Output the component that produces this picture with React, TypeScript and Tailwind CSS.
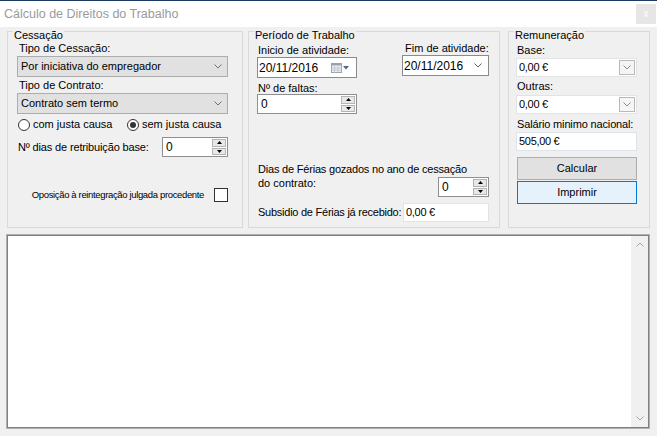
import React from 'react';

const Chevron = ({ className = '' }: { className?: string }) => (
  <svg width="8" height="5" viewBox="0 0 8 5" className={className}>
    <path d="M0.5 0.5 L4 4 L7.5 0.5" fill="none" stroke="currentColor" strokeWidth="1" />
  </svg>
);

const Combo = ({ value }: { value: string }) => (
  <div className="flex h-[21px] items-center justify-between border border-[#adadad] bg-[#e1e1e1] pl-[3px] pr-[5px]">
    <span>{value}</span>
    <Chevron className="text-[#707070]" />
  </div>
);

const Spin = ({ w, value }: { w: string; value: string }) => (
  <div className={`flex h-[20px] ${w} border border-[#8f8f8f] bg-white`}>
    <div className="flex-1 pl-[3px] text-[12px] leading-[18px]">{value}</div>
    <div className="flex w-[16px] flex-col gap-[1px] p-[1px]">
      <div className="flex flex-1 items-center justify-center border border-[#b4b4b4] bg-[#e8e8e8]">
        <svg width="5" height="3" viewBox="0 0 5 3"><path d="M0 3 L2.5 0 L5 3 Z" fill="#000" /></svg>
      </div>
      <div className="flex flex-1 items-center justify-center border border-[#b4b4b4] bg-[#e8e8e8]">
        <svg width="5" height="3" viewBox="0 0 5 3"><path d="M0 0 L2.5 3 L5 0 Z" fill="#000" /></svg>
      </div>
    </div>
  </div>
);

const MoneyCombo = ({ value }: { value: string }) => (
  <div className="flex h-[19px] border border-[#e3e3e3] bg-white p-[1px]">
    <div className="flex-1 pl-[1px] leading-[15px] tracking-[-0.3px]">{value}</div>
    <div className="flex w-[16px] items-center justify-center border border-[#b9b9b9] bg-[#f5f5f5]">
      <Chevron className="text-[#8a8a8a]" />
    </div>
  </div>
);

const Group = ({ title, className, children }: { title: string; className: string; children: React.ReactNode }) => (
  <div className={`relative h-[197px] border border-[#d9d9d9] ${className}`}>
    <span className="absolute -top-[3px] left-[5px] bg-[#f0f0f0] px-[1px] leading-[13px]">{title}</span>
    {children}
  </div>
);

const Radio = ({ checked, label }: { checked?: boolean; label: string }) => (
  <div className="flex items-center gap-[3px]">
    <div className="flex h-[12px] w-[12px] items-center justify-center rounded-full border border-[#333] bg-white">
      {checked && <div className="h-[6px] w-[6px] rounded-full bg-[#333]" />}
    </div>
    <span className="leading-[13px]">{label}</span>
  </div>
);

export default function App() {
  return (
    <div className="h-[436px] w-[657px] overflow-hidden bg-[#f0f0f0] font-['Liberation_Sans',Arial,sans-serif] text-[11px] text-black">
      <div className="flex h-[27px] items-center justify-between border-t border-[#1c3b63] bg-white">
        <span className="pl-[4px] text-[12.5px] text-[#9a9a9a]">Cálculo de Direitos do Trabalho</span>
        <div className="mr-[1px] flex h-[20px] w-[20px] items-center justify-center bg-[#e6e6e6] text-[10px] leading-none text-white">x</div>
      </div>

      <div className="mt-[4px] flex pl-[7px]">
        <Group title="Cessação" className="w-[236px] pl-[9px] pr-[14px] pt-[10px]">
          <div className="ml-[2px] leading-[13px]">Tipo de Cessação:</div>
          <div className="mt-[1px]"><Combo value="Por iniciativa do empregador" /></div>
          <div className="ml-[2px] mt-[2px] leading-[13px]">Tipo de Contrato:</div>
          <div className="mt-[1px]"><Combo value="Contrato sem termo" /></div>
          <div className="mt-[4px] flex pl-[1px]">
            <div className="w-[109px]"><Radio label="com justa causa" /></div>
            <Radio checked label="sem justa causa" />
          </div>
          <div className="mt-[6px] flex items-center justify-between">
            <span className="pl-[1px] tracking-[-0.15px]">Nº dias de retribuição base:</span>
            <Spin w="w-[66px]" value="0" />
          </div>
          <div className="mt-[31px] flex items-center justify-end gap-[10px]">
            <span className="whitespace-nowrap text-[9.5px] tracking-[-0.35px]">Oposição à reintegração julgada procedente</span>
            <div className="h-[14px] w-[14px] border border-[#333] bg-white" />
          </div>
        </Group>

        <Group title="Período de Trabalho" className="ml-[5px] w-[252px] pl-[8px] pr-[10px] pt-[10px]">
          <div className="flex">
            <div className="w-[145px] pt-[2px]">
              <div className="ml-[1px] leading-[13px]">Inicio de atividade:</div>
              <div className="flex h-[21px] w-[100px] items-center justify-between border border-[#8a8a8a] bg-white pl-[1px] pr-[7px]">
                <span className="text-[12px]">20/11/2016</span>
                <div className="flex items-center gap-[1px]">
                  <svg width="11" height="10" viewBox="0 0 11 10">
                    <rect x="0.5" y="0.5" width="10" height="9" fill="#eef1f5" stroke="#9aa3ad" />
                    <rect x="0.5" y="0.5" width="10" height="2" fill="#9aa3ad" />
                    <path d="M3.5 3 V9.5 M7 3 V9.5 M0.5 5 H10.5 M0.5 7.2 H10.5" stroke="#c2c8cf" strokeWidth="1" />
                  </svg>
                  <svg width="6" height="4" viewBox="0 0 6 4"><path d="M0 0 L3 3.5 L6 0 Z" fill="#4b6a8f" /></svg>
                </div>
              </div>
              <div className="ml-[1px] mt-[4px] leading-[12px]">Nº de faltas:</div>
              <Spin w="w-[100px]" value="0" />
            </div>
            <div>
              <div className="ml-[3px] leading-[13px]">Fim de atividade:</div>
              <div className="flex h-[21px] w-[87px] items-center justify-between border border-[#8a8a8a] bg-white pl-[1px] pr-[6px]">
                <span className="text-[12px]">20/11/2016</span>
                <Chevron className="text-[#606060]" />
              </div>
            </div>
          </div>
          <div className="mt-[48px] whitespace-nowrap pl-[1px] leading-[14px] tracking-[-0.2px]">Dias de Férias gozados no ano de cessação</div>
          <div className="flex items-start justify-between pl-[1px]">
            <span className="leading-[14px]">do contrato:</span>
            <div className="mt-[1px]"><Spin w="w-[51px]" value="0" /></div>
          </div>
          <div className="mt-[6px] flex items-center justify-between pl-[1px]">
            <span className="whitespace-nowrap tracking-[-0.25px]">Subsidio de Férias já recebido:</span>
            <div className="h-[19px] w-[86px] border border-[#e3e3e3] bg-white pl-[2px] leading-[17px] tracking-[-0.3px]">0,00 €</div>
          </div>
        </Group>

        <Group title="Remuneração" className="ml-[8px] w-[142px] pl-[7px] pr-[12px] pt-[12px]">
          <div className="ml-[1px] leading-[13px]">Base:</div>
          <div className="mt-[1px]"><MoneyCombo value="0,00 €" /></div>
          <div className="ml-[1px] mt-[3px] leading-[13px]">Outras:</div>
          <div className="mt-[2px]"><MoneyCombo value="0,00 €" /></div>
          <div className="ml-[1px] mt-[4px] whitespace-nowrap leading-[13px] tracking-[-0.15px]">Salário minimo nacional:</div>
          <div className="mt-[1px] h-[19px] border border-[#dde3ea] bg-white pl-[2px] leading-[17px] tracking-[-0.3px]">505,00 €</div>
          <div className="ml-[1px] mt-[6px] flex h-[23px] items-center justify-center border border-[#adadad] bg-[#e1e1e1]">Calcular</div>
          <div className="ml-[1px] mt-[1px] flex h-[23px] items-center justify-center border border-[#0078d7] bg-[#e5f1fb]">Imprimir</div>
        </Group>
      </div>

      <div className="ml-[6px] mt-[6px] h-[195px] w-[644px] border border-[#b0b0b0]">
        <div className="flex h-full border border-[#7f7f7f] bg-white">
          <div className="flex-1" />
          <div className="flex w-[17px] flex-col items-center justify-between bg-[#f0f0f0] py-[6px]">
            <Chevron className="rotate-180 text-[#a6a6a6]" />
            <Chevron className="text-[#a6a6a6]" />
          </div>
        </div>
      </div>
    </div>
  );
}
